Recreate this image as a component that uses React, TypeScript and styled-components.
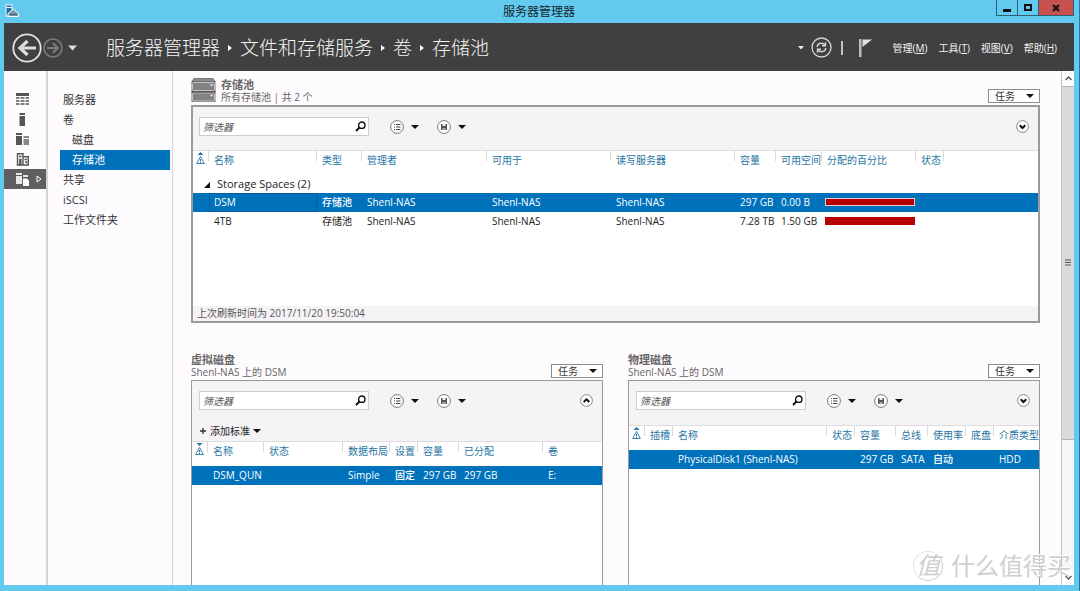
import React from 'react';
import styled, { createGlobalStyle, css } from 'styled-components';

const sans = '"Open Sans", "Noto Sans CJK SC", sans-serif';
const accent = '#0072bc';

const GlobalStyle = createGlobalStyle`
  *, *::before, *::after { box-sizing: border-box; }
  body { margin: 0; font: 10px/12px ${sans}; color: #222; background: #62caee; }
  button, input { font: inherit; color: inherit; }
  a { color: inherit; text-decoration: none; }
`;

const Shell = styled.div`
  display: flex;
  flex-direction: column;
  min-height: 100vh;
  padding: 0 5px 6px 4px;
  border-right: 1px solid #2c7595;
  background: #62caee;
`;

const TitleBar = styled.header`
  display: grid;
  grid-template-columns: 1fr auto 1fr;
  height: 23px;
  h1 {
    margin: 0;
    font-size: 12px;
    font-weight: 400;
    line-height: 23px;
    color: #16242c;
  }
  > svg { margin: 4px 0 0 1px; }
`;

const WindowButtons = styled.div`
  display: flex;
  justify-self: end;
  height: 16px;
`;

const WindowButton = styled.button<{ $close?: boolean }>`
  display: flex;
  align-items: center;
  justify-content: center;
  width: ${(p) => (p.$close ? 36 : 21)}px;
  padding: 0;
  border: 1px solid #2f5f73;
  border-top: 0;
  border-right-width: ${(p) => (p.$close ? 1 : 0)}px;
  background: ${(p) => (p.$close ? '#c75050' : 'transparent')};
`;

const CommandBar = styled.div`
  display: flex;
  align-items: center;
  height: 48px;
  padding: 1px 17px 0 8px;
  background: #404040;
  color: #f4f4f4;
`;

const IconButton = styled.button`
  display: flex;
  align-items: center;
  padding: 0;
  border: 0;
  background: none;
`;

const HistoryButtons = styled.div`
  display: flex;
  align-items: center;
  gap: 1px;
`;

const Crumbs = styled.nav`
  display: flex;
  align-items: center;
  gap: 7px;
  flex: 1;
  margin-left: 28px;
  font-size: 19px;
  line-height: 28px;
  font-weight: 300;
  white-space: nowrap;
`;

const Divider = styled.span`
  width: 2px;
  height: 14px;
  margin: 0 15px 0 9px;
  background: #c4c4c4;
`;

const Menus = styled.nav`
  display: flex;
  gap: 11px;
  margin-left: 21px;
  white-space: nowrap;
`;

const Workspace = styled.div`
  display: flex;
  flex: 1;
  background: #fefbfe;
`;

const Rail = styled.nav`
  flex: none;
  width: 44px;
  padding-top: 18px;
  border-right: 2px solid #d6d2d6;
`;

const RailLink = styled.a<{ $active?: boolean }>`
  display: flex;
  align-items: center;
  gap: 7px;
  height: 20px;
  padding-left: 12px;
  color: ${(p) => (p.$active ? '#fff' : '#555')};
  background: ${(p) => (p.$active ? '#5f5f5f' : 'none')};
`;

const SideNav = styled.nav`
  flex: none;
  width: 125px;
  padding: 19px 2px 0 12px;
  border-right: 1px solid #d6d2d6;
`;

const SideLink = styled.a<{ $active?: boolean; $nested?: boolean }>`
  display: block;
  padding-left: ${(p) => (p.$nested ? 12 : 3)}px;
  font-size: 11px;
  line-height: 20px;
  color: ${(p) => (p.$active ? '#fff' : '#333')};
  background: ${(p) => (p.$active ? accent : 'none')};
`;

const Main = styled.main`
  display: flex;
  flex-direction: column;
  gap: 29px;
  flex: 1;
  min-width: 0;
  padding: 6px 21px 0 18px;
`;

const LowerTiles = styled.div`
  display: grid;
  grid-template-columns: 1fr 1fr;
  gap: 25px;
  flex: 1;
`;

const Tile = styled.section`
  display: flex;
  flex-direction: column;
  min-width: 0;
`;

const TileHead = styled.div`
  display: flex;
  align-items: flex-end;
  gap: 5px;
  height: 28px;
  padding-bottom: 2px;
  color: #666;
  > svg { flex: none; }
`;

const TileTitle = styled.div`
  flex: 1;
  white-space: nowrap;
  h2 { margin: 0; font-size: 11px; line-height: 13px; font-weight: 700; }
  p { margin: 0; }
`;

const TasksButton = styled.button`
  display: flex;
  align-items: center;
  justify-content: space-between;
  width: 52px;
  height: 14px;
  padding: 0 5px 0 6px;
  border: 1px solid #8c8c8c;
  background: #fff;
  color: #333;
`;

const Panel = styled.div<{ $active?: boolean }>`
  display: flex;
  flex-direction: column;
  flex: 1;
  border: solid #9c999c;
  border-width: ${(p) => (p.$active ? '2px' : '1px 1px 0')};
  background: #fff;
`;

const Toolbar = styled.div<{ $active?: boolean }>`
  display: flex;
  flex-direction: column;
  gap: 13px;
  min-height: ${(p) => (p.$active ? 43 : 44)}px;
  padding: 10px 9px 2px ${(p) => (p.$active ? 6 : 7)}px;
  background: #f6f3f6;
`;

const ToolRow = styled.div`
  display: flex;
  align-items: center;
  height: 19px;
`;

const FilterBox = styled.label`
  display: flex;
  align-items: center;
  width: 170px;
  height: 19px;
  margin-right: 21px;
  padding: 0 2px 0 3px;
  border: 1px solid #cfcccf;
  background: #fff;
  input {
    flex: 1;
    min-width: 0;
    padding: 0;
    border: 0;
    outline: 0;
    background: none;
    font-style: italic;
  }
  input::placeholder { color: #555; opacity: 1; }
`;

const ToolButton = styled(IconButton)`
  gap: 7px;
  margin-right: 18px;
`;

const CollapseButton = styled(IconButton)`
  margin-left: auto;
`;

const CriteriaButton = styled(IconButton)`
  align-self: flex-start;
  gap: 3px;
  height: 16px;
`;

const TableArea = styled.div<{ $tall?: boolean }>`
  ${(p) => p.$tall && css`min-height: 156px;`}
  border-top: 1px solid #dedbde;
  overflow: hidden;
`;

const Table = styled.table`
  width: 100%;
  border-collapse: collapse;
  table-layout: fixed;
  white-space: nowrap;
`;

const HeadCell = styled.th<{ $tick?: boolean; $icon?: boolean }>`
  height: 24px;
  padding: 0 0 0 ${(p) => (p.$icon ? 3 : 5)}px;
  vertical-align: top;
  text-align: left;
  font-weight: 400;
  line-height: 19px;
  color: #1f75a3;
  background: ${(p) => (p.$tick ? 'linear-gradient(#d8d8d8, #d8d8d8) right top / 1px 10px no-repeat' : 'none')};
  svg { display: block; }
`;

const Row = styled.tr<{ $selected?: boolean }>`
  color: ${(p) => (p.$selected ? '#fff' : '#222')};
  background: ${(p) => (p.$selected ? accent : 'none')};
  font-weight: ${(p) => (p.$selected ? 500 : 400)};
`;

const Cell = styled.td<{ $focus?: boolean }>`
  height: 19px;
  padding: 0 0 2px 5px;
  ${(p) => p.$focus && css`outline: 1px dotted #0b4a78; outline-offset: -1px;`}
`;

const GroupCell = styled.td`
  height: 18px;
  padding: 0 0 0 11px;
  font-size: 11px;
  svg { margin-right: 7px; }
`;

const UsageBar = styled.div<{ $selected?: boolean }>`
  height: 8px;
  margin: 0 1px 0 -2px;
  border: 1px solid ${(p) => (p.$selected ? '#e6c9cf' : '#b80000')};
  background: #b80000;
`;

const PanelFooter = styled.div`
  height: 15px;
  padding-left: 4px;
  line-height: 15px;
  color: #555;
  background: #f6f3f6;
`;

const ScrollBar = styled.div`
  display: flex;
  flex-direction: column;
  flex: none;
  width: 13px;
  border-left: 1px solid #c4c0c4;
  background: #f8f5f8;
`;

const ScrollStep = styled.button`
  display: flex;
  align-items: center;
  justify-content: center;
  height: 15px;
  padding: 0;
  border: 0;
  background: #fff;
`;

const ScrollThumb = styled.div`
  display: flex;
  align-items: center;
  justify-content: center;
  flex: 353;
  border: solid #b5b5b5;
  border-width: 1px 0;
  background: #dadada;
`;

const ScrollTrack = styled.div`
  flex: 131;
`;

const Watermark = styled.div`
  position: absolute;
  right: 9px;
  bottom: 9px;
  display: flex;
  align-items: center;
  gap: 8px;
  font-size: 24px;
  line-height: 32px;
  color: #cfcfcf;
  text-shadow: -1px -1px 0 #fff;
  pointer-events: none;
`;

const Seal = styled.span`
  width: 30px;
  height: 30px;
  border: 1px solid #e4e4e4;
  border-right-color: #cfcfcf;
  border-bottom-color: #cfcfcf;
  border-radius: 50%;
  text-align: center;
  line-height: 26px;
  font-style: italic;
`;

const Caret = () => (
  <svg width="8" height="4" viewBox="0 0 8 4">
    <path d="M0 0H8L4 4Z" fill="#111" />
  </svg>
);

const CrumbArrow = () => (
  <svg width="6" height="8" viewBox="0 0 6 8">
    <path d="M1 1L5 4L1 7Z" fill="#fff" />
  </svg>
);

const ServerManagerIcon = () => (
  <svg width="14" height="14" viewBox="0 0 14 14">
    <path d="M.5 .5H7.500V12.500H.5Z" fill="#e9f7fc" />
    <path d="M1.500 1.500H6.500V3H1.500ZM1.500 4H6.500V11.500H1.500Z" fill="#2370a8" />
    <path d="M3 12.500V9.500L8.500 5L13.500 9.500V12.500Z" fill="#7f9cae" stroke="#f4fbfe" />
    <path d="M5 10.500H12" stroke="#44687d" strokeWidth="1.500" />
  </svg>
);

const BackIcon = () => (
  <svg width="30" height="30" viewBox="0 0 30 30" fill="none">
    <circle cx="15" cy="15" r="13.7" stroke="#e2e2e2" strokeWidth="1.8" />
    <path d="M24 15H9" stroke="#ddd" strokeWidth="3" />
    <path d="M15.5 8L8 15L15.5 22" stroke="#ddd" strokeWidth="3.2" />
  </svg>
);

const ForwardIcon = () => (
  <svg width="20" height="20" viewBox="0 0 20 20" fill="none" stroke="#7b7b7b">
    <circle cx="10" cy="10" r="9" strokeWidth="1.6" />
    <path d="M4 10H14" strokeWidth="2" />
    <path d="M10 5.3L14.7 10L10 14.7" strokeWidth="2.2" />
  </svg>
);

const RefreshIcon = () => (
  <svg width="21" height="21" viewBox="0 0 21 21" fill="none" stroke="#d4d4d4">
    <circle cx="10.500" cy="10.500" r="9.500" strokeWidth="1.300" />
    <path d="M6.200 10C6.500 7.500 8.500 6.300 10.500 6.300C12 6.300 13.200 7 14 8M14.800 11C14.500 13.500 12.500 14.700 10.500 14.700C9 14.700 7.800 14 7 13" strokeWidth="1.500" />
    <path d="M14.500 5.300V8.700H11M6.500 15.700V12.300H10" strokeWidth="1.400" />
  </svg>
);

const FlagIcon = () => (
  <svg width="14" height="20" viewBox="0 0 14 20">
    <path d="M1 1H3.500V19H1Z" fill="#bdbdbd" />
    <path d="M4.500 1.500H14L4.500 9Z" fill="#e2e2e2" />
  </svg>
);

const SearchIcon = () => (
  <svg width="11" height="11" viewBox="0 0 11 11" fill="none" stroke="#111">
    <circle cx="6.800" cy="4.200" r="3.200" strokeWidth="1.400" />
    <path d="M4.500 6.500L1 10" strokeWidth="2" />
  </svg>
);

const ListIcon = () => (
  <svg width="14" height="14" viewBox="0 0 14 14" fill="none">
    <circle cx="7" cy="7" r="6.400" fill="#fff" stroke="#777" />
    <path d="M4 4.500H5M4 7H5M4 9.500H5M6 4.500H10.500M6 7H10.500M6 9.500H10.500" stroke="#444" strokeWidth="1.100" />
  </svg>
);

const SaveIcon = () => (
  <svg width="14" height="14" viewBox="0 0 14 14" fill="none">
    <circle cx="7" cy="7" r="6.400" fill="#fff" stroke="#777" />
    <path d="M4 4H10V10H4Z" fill="#555" />
    <path d="M5.500 4H8.500V6H5.500ZM5.700 8H6.600V10H5.700ZM7.500 8H8.400V10H7.500Z" fill="#eee" />
  </svg>
);

const ToggleIcon = ({ up }: { up?: boolean }) => (
  <svg width="13" height="13" viewBox="0 0 13 13" fill="none">
    <circle cx="6.500" cy="6.500" r="5.900" fill="#fff" stroke="#888" />
    <path d={up ? 'M3.700 8L6.500 5.300L9.300 8' : 'M3.700 5.300L6.500 8L9.300 5.300'} stroke="#111" strokeWidth="2" />
  </svg>
);

const PoolIcon = () => (
  <svg width="25" height="26" viewBox="0 0 25 26">
    <path d="M3 1H22L24.500 4.500V25H.5V4.500Z" fill="#6c6c6c" />
    <path d="M3 1.500H22L23.500 4H1.500Z" fill="#8b8b8b" />
    <rect x="1.500" y="5.500" width="22" height="8" rx="1" fill="#838383" stroke="#c4c4c4" />
    <rect x="1.500" y="16" width="22" height="8" rx="1" fill="#838383" stroke="#c4c4c4" />
    <path d="M19.500 8H21.500M19.500 18.500H21.500" stroke="#fff" strokeWidth="1.500" />
    <path d="M.5 15H24.500" stroke="#4c4c4c" />
  </svg>
);

const AlertSortIcon = ({ down }: { down?: boolean }) => (
  <svg width="9" height="14" viewBox="0 0 9 14" fill="none">
    <path d={down ? 'M1.500 1H7.500L4.500 4Z' : 'M1.500 4H7.500L4.500 1Z'} fill="#1f75a3" />
    <path d="M4.500 5.500L8.300 12.500H.7Z" stroke="#1f75a3" strokeWidth=".9" />
    <path d="M4.500 8V10.300M4.500 11V12" stroke="#1f75a3" />
  </svg>
);

const railIcons = [
  <svg key="dashboard" width="13" height="12" viewBox="0 0 13 12" fill="currentColor">
    <path d="M0 0H13V3H0Z" />
    <path d="M0 4H3.500V6H0ZM4.500 4H8.500V6H4.500ZM9.500 4H13V6H9.500ZM0 7H3.500V9H0ZM4.500 7H8.500V9H4.500ZM9.500 7H13V9H9.500ZM0 10H3.500V12H0ZM4.500 10H8.500V12H4.500ZM9.500 10H13V12H9.500Z" opacity=".75" />
  </svg>,
  <svg key="local" width="13" height="13" viewBox="0 0 13 13" fill="currentColor">
    <path d="M3.500 0H9V2H3.500ZM3.500 3H9V13H3.500Z" />
  </svg>,
  <svg key="all" width="13" height="13" viewBox="0 0 13 13" fill="currentColor">
    <path d="M0 0H6V2H0ZM0 3H6V12H0Z" />
    <path d="M7.500 3H13V5H7.500ZM7.500 6H13V12H7.500Z" opacity=".7" />
  </svg>,
  <svg key="ad" width="13" height="13" viewBox="0 0 13 13" fill="none" stroke="currentColor">
    <path d="M1.500 .7H7V12H1.500ZM7 3.700H12.300V12H7Z" strokeWidth="1.400" />
    <path d="M3 3.500H5.500M8.500 6.500H11" strokeWidth="1.300" />
    <path d="M3.300 6H5.300V12H3.300ZM9.500 8.500H11V10H9.500Z" fill="currentColor" strokeWidth=".5" />
  </svg>,
  <svg key="files" width="13" height="13" viewBox="0 0 13 13" fill="currentColor">
    <path d="M0 0H6V2H0ZM0 3H6V11H0ZM7 2H12V4H7Z" opacity=".85" />
    <path d="M7 5.500H11L13 7.500V13H7Z" />
  </svg>,
];

const railLabels = ['仪表板', '本地服务器', '所有服务器', 'AD DS', '文件和存储服务'];

const sideItems: { label: string; nested?: boolean }[] = [
  { label: '服务器' },
  { label: '卷' },
  { label: '磁盘', nested: true },
  { label: '存储池', nested: true },
  { label: '共享' },
  { label: 'iSCSI' },
  { label: '工作文件夹' },
];

const menus = [
  ['管理', 'M'],
  ['工具', 'T'],
  ['视图', 'V'],
  ['帮助', 'H'],
];

type Column = { label: string; width?: number };

const poolColumns: Column[] = [
  { label: '名称', width: 108 },
  { label: '类型', width: 45 },
  { label: '管理者', width: 125 },
  { label: '可用于', width: 124 },
  { label: '读写服务器', width: 124 },
  { label: '容量', width: 41 },
  { label: '可用空间', width: 46 },
  { label: '分配的百分比', width: 94 },
  { label: '状态', width: 28 },
  { label: '' },
];

const diskColumns: Column[] = [
  { label: '名称', width: 56 },
  { label: '状态', width: 79 },
  { label: '数据布局', width: 47 },
  { label: '设置', width: 28 },
  { label: '容量', width: 41 },
  { label: '已分配', width: 84 },
  { label: '卷' },
];

const physicalColumns: Column[] = [
  { label: '插槽', width: 28 },
  { label: '名称' },
  { label: '状态', width: 28 },
  { label: '容量', width: 41 },
  { label: '总线', width: 32 },
  { label: '使用率', width: 38 },
  { label: '底盘', width: 28 },
  { label: '介质类型', width: 45 },
];

const TableHead = ({ columns, down }: { columns: Column[]; down?: boolean }) => (
  <>
    <colgroup>
      <col width={16} />
      {columns.map((c, i) => (
        <col key={i} width={c.width} />
      ))}
    </colgroup>
    <thead>
      <tr>
        <HeadCell $tick $icon aria-label="警报">
          <AlertSortIcon down={down} />
        </HeadCell>
        {columns.map((c, i) => (
          <HeadCell key={i} $tick={i < columns.length - 1}>
            {c.label}
          </HeadCell>
        ))}
      </tr>
    </thead>
  </>
);

const DataRow = ({ cells, selected, focus }: { cells: React.ReactNode[]; selected?: boolean; focus?: boolean }) => (
  <Row $selected={selected}>
    <Cell />
    {cells.map((c, i) => (
      <Cell key={i} $focus={focus && i === 0}>
        {c}
      </Cell>
    ))}
  </Row>
);

const Head = ({ title, note, icon }: { title: string; note: string; icon?: React.ReactNode }) => (
  <TileHead>
    {icon}
    <TileTitle>
      <h2>{title}</h2>
      <p>{note}</p>
    </TileTitle>
    <TasksButton>
      任务
      <Caret />
    </TasksButton>
  </TileHead>
);

const Tools = ({ up }: { up?: boolean }) => (
  <ToolRow>
    <FilterBox>
      <input type="text" placeholder="筛选器" aria-label="筛选器" />
      <SearchIcon />
    </FilterBox>
    <ToolButton aria-label="列表">
      <ListIcon />
      <Caret />
    </ToolButton>
    <ToolButton aria-label="保存">
      <SaveIcon />
      <Caret />
    </ToolButton>
    <CollapseButton aria-label={up ? '折叠' : '展开'}>
      <ToggleIcon up={up} />
    </CollapseButton>
  </ToolRow>
);

export default function App() {
  return (
    <Shell>
      <GlobalStyle />
      <TitleBar>
        <ServerManagerIcon />
        <h1>服务器管理器</h1>
        <WindowButtons>
          <WindowButton aria-label="最小化">
            <svg width="8" height="8" viewBox="0 0 8 8"><path d="M0 5H8V8H0Z" fill="#111" /></svg>
          </WindowButton>
          <WindowButton aria-label="最大化">
            <svg width="8" height="7" viewBox="0 0 8 7"><path d="M1 1H7V6H1Z" fill="none" stroke="#111" strokeWidth="2" /></svg>
          </WindowButton>
          <WindowButton $close aria-label="关闭">
            <svg width="8" height="8" viewBox="0 0 8 8"><path d="M1 1L7 7M7 1L1 7" stroke="#111" strokeWidth="2" /></svg>
          </WindowButton>
        </WindowButtons>
      </TitleBar>

      <CommandBar>
        <HistoryButtons>
          <IconButton aria-label="后退"><BackIcon /></IconButton>
          <IconButton aria-label="前进"><ForwardIcon /></IconButton>
          <IconButton aria-label="历史记录">
            <svg width="14" height="6" viewBox="0 0 14 6"><path d="M4 .5H13L8.500 5.500Z" fill="#ddd" /></svg>
          </IconButton>
        </HistoryButtons>
        <Crumbs>
          <a href="#home">服务器管理器</a>
          <CrumbArrow />
          <a href="#files">文件和存储服务</a>
          <CrumbArrow />
          <a href="#volumes">卷</a>
          <CrumbArrow />
          <a href="#pools">存储池</a>
        </Crumbs>
        <IconButton aria-label="刷新">
          <svg width="13" height="4" viewBox="0 0 13 4"><path d="M0 0H6L3 3.500Z" fill="#eee" /></svg>
          <RefreshIcon />
        </IconButton>
        <Divider />
        <IconButton aria-label="通知"><FlagIcon /></IconButton>
        <Menus>
          {menus.map(([label, key]) => (
            <a key={key} href={`#menu-${key}`}>
              {label}(<u>{key}</u>)
            </a>
          ))}
        </Menus>
      </CommandBar>

      <Workspace>
        <Rail>
          {railIcons.map((icon, i) => (
            <RailLink key={i} href={`#rail-${i}`} aria-label={railLabels[i]} $active={i === 4}>
              {icon}
              {i === 4 && (
                <svg width="6" height="8" viewBox="0 0 6 8"><path d="M1 1L5 4L1 7Z" fill="none" stroke="#fff" /></svg>
              )}
            </RailLink>
          ))}
        </Rail>
        <SideNav>
          {sideItems.map((item) => (
            <SideLink key={item.label} href={`#${item.label}`} $nested={item.nested} $active={item.label === '存储池'}>
              {item.label}
            </SideLink>
          ))}
        </SideNav>

        <Main>
          <Tile>
            <Head title="存储池" note="所有存储池 | 共 2 个" icon={<PoolIcon />} />
            <Panel $active>
              <Toolbar $active>
                <Tools />
              </Toolbar>
              <TableArea $tall>
                <Table>
                  <TableHead columns={poolColumns} />
                  <tbody>
                    <tr>
                      <GroupCell colSpan={11}>
                        <svg width="6" height="6" viewBox="0 0 6 6"><path d="M6 0V6H0Z" fill="#111" /></svg>
                        Storage Spaces (2)
                      </GroupCell>
                    </tr>
                    <DataRow
                      selected
                      focus
                      cells={['DSM', '存储池', 'Shenl-NAS', 'Shenl-NAS', 'Shenl-NAS', '297 GB', '0.00 B', <UsageBar $selected />, '', '']}
                    />
                    <DataRow
                      cells={['4TB', '存储池', 'Shenl-NAS', 'Shenl-NAS', 'Shenl-NAS', '7.28 TB', '1.50 GB', <UsageBar />, '', '']}
                    />
                  </tbody>
                </Table>
              </TableArea>
              <PanelFooter>上次刷新时间为 2017/11/20 19:50:04</PanelFooter>
            </Panel>
          </Tile>

          <LowerTiles>
            <Tile>
              <Head title="虚拟磁盘" note="Shenl-NAS 上的 DSM" />
              <Panel>
                <Toolbar>
                  <Tools up />
                  <CriteriaButton>
                    <svg width="8" height="8" viewBox="0 0 8 8"><path d="M4 1V7M1 4H7" stroke="#333" strokeWidth="1.300" /></svg>
                    添加标准
                    <Caret />
                  </CriteriaButton>
                </Toolbar>
                <TableArea>
                  <Table>
                    <TableHead columns={diskColumns} down />
                    <tbody>
                      <DataRow selected cells={['DSM_QUN', '', 'Simple', '固定', '297 GB', '297 GB', 'E:']} />
                    </tbody>
                  </Table>
                </TableArea>
              </Panel>
            </Tile>
            <Tile>
              <Head title="物理磁盘" note="Shenl-NAS 上的 DSM" />
              <Panel>
                <Toolbar>
                  <Tools />
                </Toolbar>
                <TableArea>
                  <Table>
                    <TableHead columns={physicalColumns} />
                    <tbody>
                      <DataRow
                        selected
                        cells={['', 'PhysicalDisk1 (Shenl-NAS)', '', '297 GB', 'SATA', '自动', '', 'HDD']}
                      />
                    </tbody>
                  </Table>
                </TableArea>
              </Panel>
            </Tile>
          </LowerTiles>
        </Main>

        <ScrollBar>
          <ScrollStep aria-label="向上滚动">
            <svg width="7" height="5" viewBox="0 0 7 5"><path d="M.5 4L3.500 1L6.500 4" fill="none" stroke="#555" strokeWidth="1.300" /></svg>
          </ScrollStep>
          <ScrollThumb>
            <svg width="6" height="7" viewBox="0 0 6 7"><path d="M0 1H6M0 3.500H6M0 6H6" stroke="#555" /></svg>
          </ScrollThumb>
          <ScrollTrack />
          <ScrollStep aria-label="向下滚动">
            <svg width="7" height="5" viewBox="0 0 7 5"><path d="M.5 1L3.500 4L6.500 1" fill="none" stroke="#555" strokeWidth="1.300" /></svg>
          </ScrollStep>
        </ScrollBar>
      </Workspace>

      <Watermark>
        <Seal>值</Seal>
        什么值得买
      </Watermark>
    </Shell>
  );
}
